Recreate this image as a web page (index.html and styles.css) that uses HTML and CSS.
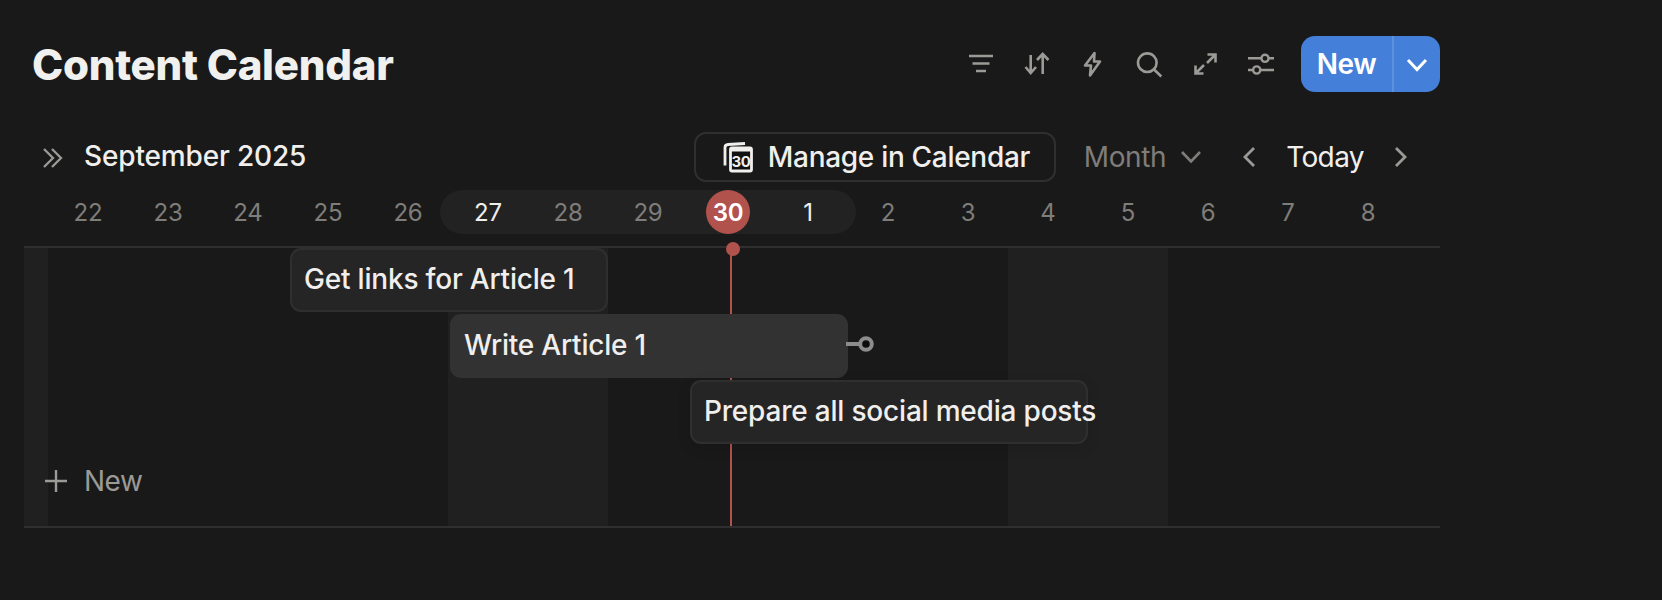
FILE: index.html
```html
<!DOCTYPE html>
<html lang="en">
<head>
<meta charset="utf-8">
<title>Content Calendar</title>
<link rel="stylesheet" href="styles.css">
</head>
<body>
<main class="page">
  <header class="head">
    <h1 class="title">Content Calendar</h1>
    <div class="tools">
      <button class="tool" aria-label="Filter"><svg width="28" height="28" viewBox="0 0 28 28"><path d="M2 6h24M5.500 13.500h17M9 21h10"/></svg></button>
      <button class="tool" aria-label="Sort"><svg width="28" height="28" viewBox="0 0 28 28"><path d="M7.700 5v18M2.500 17l5.200 6 5.300-6M19.700 24V4M14 10l5.700-6 5.800 6"/></svg></button>
      <button class="tool" aria-label="Automations"><svg width="28" height="28" viewBox="0 0 28 28"><path d="M15.500 3 6 15.500h6L11 25.500 21 11.500h-6z" stroke-linejoin="round"/></svg></button>
      <button class="tool" aria-label="Search"><svg width="28" height="28" viewBox="0 0 28 28"><circle cx="12.300" cy="12.700" r="9.300"/><path d="m19.300 19.700 7 6.800"/></svg></button>
      <button class="tool" aria-label="Expand"><svg width="28" height="28" viewBox="0 0 28 28"><path d="M16.500 4.500h8v8M24.500 4.500 16 13M4.500 15.500v8h8M4.500 23.500 13 15"/></svg></button>
      <button class="tool" aria-label="Settings"><svg width="28" height="28" viewBox="0 0 28 28"><path d="M1 8.300h26M1 20h26"/><circle class="knob" cx="18" cy="8.300" r="3.600"/><circle class="knob" cx="9.700" cy="20" r="3.600"/></svg></button>
    </div>
    <div class="new-btn">
      <span class="new-label">New</span>
      <span class="new-arrow"><svg width="22" height="14" viewBox="0 0 22 14"><path d="m2 2 9 9.500L20 2"/></svg></span>
    </div>
  </header>

  <section class="bar">
    <svg class="dbl" width="20" height="20" viewBox="0 0 20 20"><path d="m1 1 9 9-9 9M9 1l9 9-9 9"/></svg>
    <span class="month-title">September 2025</span>
    <div class="manage">
      <svg class="cal-icon" width="30" height="32" viewBox="0 0 30 32">
        <path class="cal-back" d="M22 2.500 5 3.500Q2 3.700 2 6.500v18"/>
        <rect class="cal-front" x="7.500" y="7" width="21" height="23" rx="1.500"/>
        <path class="cal-head" d="M7.500 9h21"/>
        <text class="cal-num" x="18" y="26">30</text>
      </svg>
      <span>Manage in Calendar</span>
    </div>
    <span class="month-select">Month</span>
    <svg class="chev-month" width="20" height="12" viewBox="0 0 20 12"><path d="m1 1 9 9.500L19 1"/></svg>
    <svg class="chev-left" width="12" height="20" viewBox="0 0 12 20"><path d="M11 1 2 10l9 9"/></svg>
    <span class="today">Today</span>
    <svg class="chev-right" width="12" height="20" viewBox="0 0 12 20"><path d="m1 1 9 9-9 9"/></svg>
  </section>

  <section class="dates">
    <span class="pill"></span>
    <span class="date">22</span><span class="date">23</span><span class="date">24</span><span class="date">25</span><span class="date">26</span>
    <span class="date is-on">27</span><span class="date">28</span><span class="date">29</span>
    <span class="date"><span class="today-mark">30</span></span>
    <span class="date is-on">1</span><span class="date">2</span><span class="date">3</span><span class="date">4</span><span class="date">5</span><span class="date">6</span><span class="date">7</span><span class="date">8</span>
  </section>

  <section class="timeline">
    <div class="band band-a"></div>
    <div class="band band-b"></div>
    <div class="band band-c"></div>
    <div class="now-line"></div>
    <div class="now-dot"></div>
    <div class="card card-one">Get links for Article 1</div>
    <div class="card card-two">Write Article 1
      <span class="link"><svg width="28" height="18" viewBox="0 0 28 18"><path d="M0 9h14"/><circle cx="20" cy="9" r="5.800"/></svg></span>
    </div>
    <div class="card card-three">Prepare all social media posts</div>
    <div class="add-new">
      <svg width="22" height="22" viewBox="0 0 22 22"><path d="M11 0v22M0 11h22"/></svg>
      <span>New</span>
    </div>
  </section>
</main>
</body>
</html>
```

FILE: styles.css
```css
* { box-sizing: border-box; }

html, body {
  margin: 0;
  background: #191919;
}

body {
  font-family: Inter, "Liberation Sans", sans-serif;
  color: #f0efed;
  height: 600px;
  overflow: hidden;
}

svg { display: block; fill: none; }

.page {
  width: 1440px;
  padding: 36px 0 0 24px;
}

.head {
  display: flex;
  align-items: center;
  height: 56px;
  padding-left: 8px;
}

.title {
  margin: 0;
  padding-top: 2px;
  font-size: 42px;
  line-height: 52px;
  font-weight: 800;
  letter-spacing: -0.25px;
  color: #f0f0ee;
  flex: 1;
}

.tools {
  display: flex;
  margin-right: 12px;
}

.tool {
  width: 56px;
  height: 56px;
  display: flex;
  align-items: center;
  justify-content: center;
  padding: 0;
  background: none;
  border: 0;
}

.tool svg { stroke: #9b9a96; stroke-width: 2.600; }

.tool .knob { fill: #191919; stroke-width: 2.400; }

.new-btn {
  display: flex;
  width: 139px;
  height: 56px;
  border-radius: 14px;
  background: #4480d9;
  color: #fff;
  font-size: 28px;
  font-weight: 600;
  letter-spacing: -0.5px;
}

.new-label {
  width: 93px;
  display: flex;
  align-items: center;
  justify-content: center;
  border-right: 2px solid #5d90dd;
}

.new-arrow {
  flex: 1;
  display: flex;
  align-items: center;
  justify-content: center;
  padding-top: 2px;
}

.new-arrow svg { stroke: #fff; stroke-width: 3; }

.bar {
  display: flex;
  align-items: center;
  height: 50px;
  margin-top: 40px;
  padding-left: 19px;
}

.dbl { stroke: #9b9a96; stroke-width: 2.300; margin-top: 1px; }

.month-title {
  margin-left: 21px;
  padding-bottom: 2px;
  font-size: 28px;
  font-weight: 550;
  letter-spacing: -0.15px;
  color: #f0efed;
}

.manage {
  display: flex;
  align-items: center;
  gap: 15px;
  width: 362px;
  height: 50px;
  margin-left: auto;
  padding-left: 27px;
  border: 2px solid #2f2f2f;
  border-radius: 12px;
  font-size: 28px;
  font-weight: 550;
  letter-spacing: -0.3px;
}

.cal-back { stroke: #f0efed; stroke-width: 2.800; }

.cal-front { stroke: #f0efed; stroke-width: 2.800; fill: #111; }

.cal-head { stroke: #f0efed; stroke-width: 3; }

.cal-num {
  fill: #f0efed;
  font-size: 15px;
  font-weight: 700;
  letter-spacing: -0.3px;
  text-anchor: middle;
}

.month-select {
  margin-left: 28px;
  font-size: 28px;
  letter-spacing: -0.4px;
  color: #7f7d79;
}

.chev-month { stroke: #7f7d79; stroke-width: 2.600; margin-left: 15px; }

.chev-left { stroke: #9b9a96; stroke-width: 2.800; margin-left: 42px; }

.today {
  margin-left: 31px;
  font-size: 28px;
  letter-spacing: -0.6px;
  color: #f0efed;
}

.chev-right { stroke: #9b9a96; stroke-width: 2.800; margin-left: 31px; margin-right: 33px; }

.dates {
  position: relative;
  display: grid;
  grid-template-columns: repeat(17, 80px);
  height: 44px;
  margin-top: 8px;
  padding-left: 24px;
}

.pill {
  position: absolute;
  left: 416px;
  top: 0;
  width: 416px;
  height: 44px;
  border-radius: 22px;
  background: #222;
}

.date {
  position: relative;
  display: flex;
  align-items: center;
  justify-content: center;
  font-size: 24px;
  letter-spacing: -0.2px;
  color: #7f7d79;
}

.is-on { color: #f0efed; }

.today-mark {
  width: 44px;
  height: 44px;
  border-radius: 50%;
  display: flex;
  align-items: center;
  justify-content: center;
  background: #b2524d;
  color: #fff;
  font-weight: 600;
}

.timeline {
  position: relative;
  display: grid;
  grid-template-columns: 24px repeat(17, 80px) 1fr;
  grid-template-rows: 66px 66px 66px 80px;
  width: 1416px;
  height: 282px;
  margin-top: 12px;
  border-top: 2px solid #2f2f2f;
  border-bottom: 2px solid #2f2f2f;
}

.band { grid-row: 1 / -1; background: #202020; }

.band-a { grid-column: 1; }

.band-b { grid-column: 7 / span 2; }

.band-c { grid-column: 14 / span 2; }

.now-line {
  position: absolute;
  left: 706px;
  top: 0;
  bottom: 0;
  width: 2px;
  background: #b2524d;
}

.now-dot {
  position: absolute;
  left: 702px;
  top: -6px;
  width: 14px;
  height: 14px;
  border-radius: 50%;
  background: #b2524d;
}

.card {
  position: relative;
  display: flex;
  align-items: center;
  height: 64px;
  margin-left: 2px;
  padding: 0 0 2px 12px;
  border: 2px solid #2f2f2f;
  border-radius: 11px;
  background: #252525;
  font-size: 28px;
  font-weight: 550;
  letter-spacing: -0.2px;
  white-space: nowrap;
  color: #f0efed;
}

.card-one { grid-column: 5 / span 4; grid-row: 1; }

.card-two {
  grid-column: 7 / span 5;
  grid-row: 2;
  padding-left: 14px;
  border: 0;
  background: #323232;
}

.card-three {
  grid-column: 10 / span 5;
  grid-row: 3;
  box-shadow: 0 4px 14px rgba(0, 0, 0, 0.12);
}

.link {
  position: absolute;
  right: -26px;
  top: 21px;
}

.link svg { stroke: #8c8c8c; stroke-width: 4; }

.link circle { fill: #0d0d0d; }

.add-new {
  grid-column: 1 / span 3;
  grid-row: 4;
  align-self: start;
  display: flex;
  align-items: center;
  gap: 17px;
  height: 36px;
  margin: 17px 0 0 21px;
  font-size: 28px;
  letter-spacing: -0.5px;
  color: #9b9a96;
  position: relative;
}

.add-new svg { stroke: #9b9a96; stroke-width: 2.400; }
```
